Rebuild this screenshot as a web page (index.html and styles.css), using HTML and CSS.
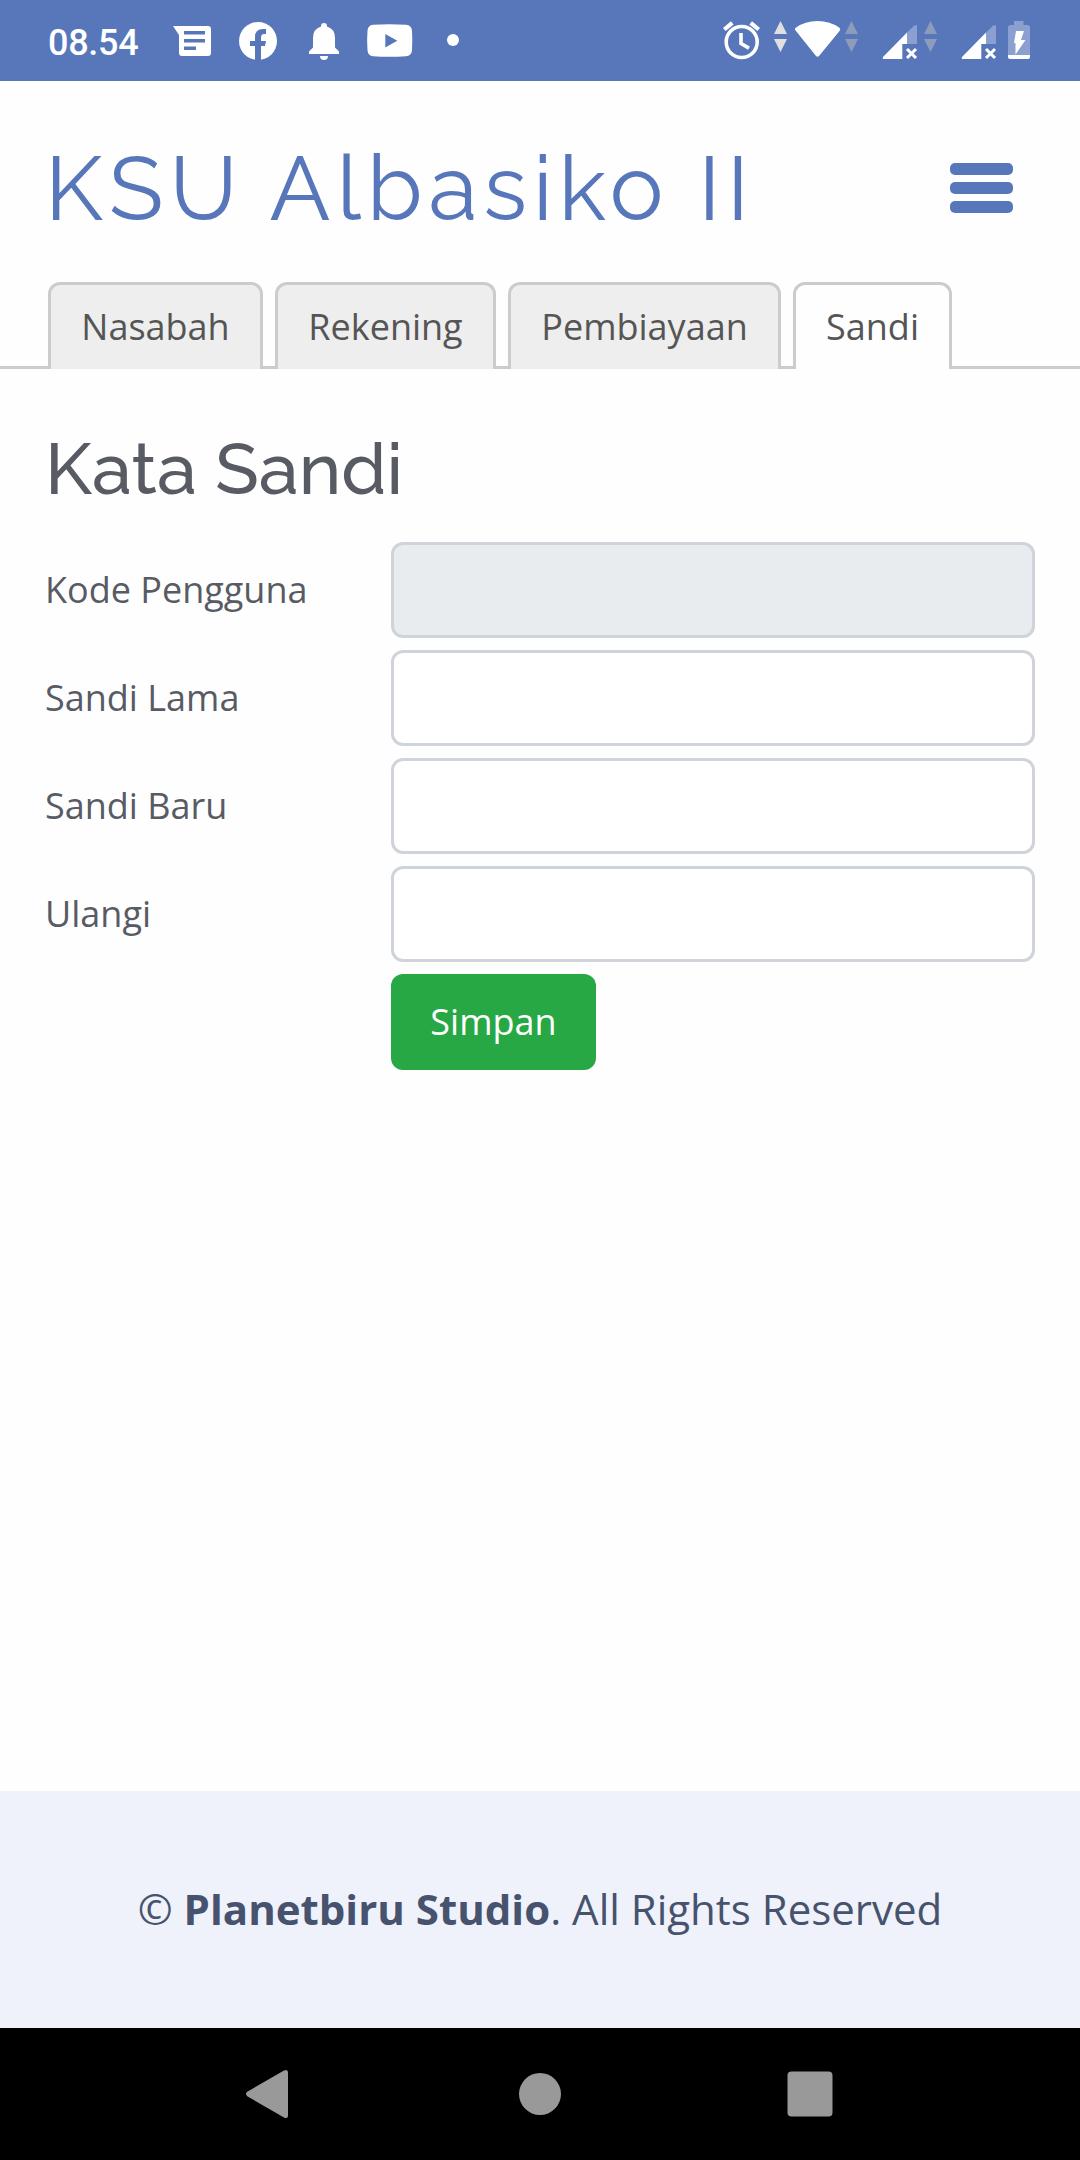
FILE: index.html
```html
<!DOCTYPE html>
<html lang="id">
<head>
<meta charset="utf-8">
<title>KSU Albasiko II</title>
<link rel="stylesheet" href="styles.css">
</head>
<body>
<div class="statusbar">
  <span class="clock">08.54</span>
  <svg class="notifications" width="300" height="81" viewBox="165 0 300 81" fill="#fff">
    <path d="M173 26h35q3 0 3 3v24q0 3-3 3h-26q-3 0-3-3V35z"/>
    <path d="M184 31h21v3.500h-21zM184 39h21v3.500h-21zM184 46.500h12v3.500h-12z" fill="#5777ba"/>
    <circle cx="258" cy="41" r="19"/>
    <path d="M255 60V46h-5v-5h5v-4q0-8 8-8h3v5h-2q-3 0-3 4v3h5l-1 5h-4v14z" fill="#5777ba"/>
    <path d="M309 54v-2.500l4-4V38q0-9 8-11.500V26a3 3 0 0 1 6 0v.5q8 2.500 8 11.500v9.500l4 4V54zM320 56h8a4 4 0 0 1-8 0z"/>
    <path d="M373 24.800q16.500-1 33 0 5.500.4 6 6 .6 9.700 0 19.400-.5 5.500-6 6-16.500 1-33 0-5-.5-5.500-6-.8-9.700 0-19.400.5-5.600 5.500-6z"/>
    <path d="M385.300 34v13.500l12-6.700z" fill="#5777ba"/>
    <circle cx="453" cy="40" r="6"/>
  </svg>
  <svg class="system" width="320" height="81" viewBox="715 0 320 81" fill="#fff">
    <g fill="none" stroke="#fff" stroke-width="3.600">
      <circle cx="741.700" cy="42" r="15.500"/>
      <path d="M741 33v10.500l8 4.600"/>
      <path d="M724.300 29.500l8-6.700M758.700 29.500l-8-6.700" stroke-width="4.200"/>
    </g>
    <path d="M780.500 21l6.500 13h-13zM774 39h13l-6.500 13z" fill="#e0e0e0"/>
    <path d="M796 31q-2-1.800-.3-3.300Q805 21 817.500 21t22 6.700q1.500 1.300 0 3.300L819 56q-1.500 1.500-3 0z"/>
    <g fill="#8c9cba"><path d="M851.500 21l6.500 13h-13zM845 39h13l-6.500 13z"/><path d="M930.500 21l6.500 13h-13zM924 39h13l-6.500 13z"/></g>
    <g id="signal">
      <path d="M883 59q-.5-1 0-2l24-24.500V44h-4.700v15z"/>
      <path d="M907 32.500l7-6.700q3-2 3 .7V44h-10z" fill="#8ba0d0"/>
      <path d="M907 49l9 9M916 49l-9 9" fill="none" stroke="#fff" stroke-width="3"/>
    </g>
    <use href="#signal" x="79"/>
    <path d="M1014 21h9.500v4h4q2.500 0 2.500 2.500V55h-22V27.500q0-2.500 2.500-2.500h3.500z" fill="#8ba0d0"/>
    <path d="M1008 55h22v2q0 2-2 2h-18q-2 0-2-2z"/>
    <path d="M1016 31h8l-3 9h4.500L1015.500 54.500V43h-1.500z"/>
  </svg>
</div>

<header class="header">
  <h1 class="brand">KSU Albasiko II</h1>
  <button class="menu" aria-label="Menu"><span class="bar"></span><span class="bar"></span><span class="bar"></span></button>
</header>

<nav class="tabs">
  <a class="tab tab-nasabah">Nasabah</a>
  <a class="tab tab-rekening">Rekening</a>
  <a class="tab tab-pembiayaan">Pembiayaan</a>
  <a class="tab tab-sandi active">Sandi</a>
</nav>

<main class="content">
  <h2 class="title">Kata Sandi</h2>
  <form class="form">
    <label class="label" for="user">Kode Pengguna</label><input class="field" id="user" disabled>
    <label class="label" for="old">Sandi Lama</label><input class="field" id="old" type="password">
    <label class="label" for="new">Sandi Baru</label><input class="field" id="new" type="password">
    <label class="label" for="repeat">Ulangi</label><input class="field" id="repeat" type="password">
    <button class="save" type="button">Simpan</button>
  </form>
</main>

<footer class="footer"><p class="copyright">© <strong>Planetbiru Studio</strong>. All Rights Reserved</p></footer>

<div class="navbar">
  <svg width="48" height="52" viewBox="0 0 48 52"><path d="M1.200 23.800L38 2.500q4-1.800 4 2v43q0 3.800-4 2L1.200 28.200q-2.400-2.200 0-4.400z"/></svg>
  <svg width="48" height="52" viewBox="0 0 48 52"><circle cx="24" cy="26" r="21"/></svg>
  <svg width="48" height="52" viewBox="0 0 48 52"><rect x="1.500" y="3.500" width="45" height="45" rx="4"/></svg>
</div>
</body>
</html>
```

FILE: styles.css
```css
* { box-sizing: border-box; }
body {
  margin: 0;
  width: 1080px;
  height: 2160px;
  display: flex;
  flex-direction: column;
  background: #fefefe;
  color: #585b63;
  font-family: "Open Sans", sans-serif;
  font-size: 36px;
}
svg { display: block; }
.statusbar {
  height: 81px;
  display: flex;
  align-items: center;
  background: #5777ba;
  color: #fff;
}
.clock {
  width: 117px;
  margin-left: 48px;
  font: 500 36px/44px Roboto, sans-serif;
  letter-spacing: -0.3px;
  padding-top: 4px;
}
.system { margin-left: auto; margin-right: 45px; }
.header {
  height: 201px;
  display: flex;
  justify-content: space-between;
  padding: 0 67px 0 45px;
}
.brand {
  margin: 53px 0 0;
  font: 400 90px/108px Raleway, Lato, sans-serif;
  letter-spacing: 6px;
  color: #5777ba;
  white-space: nowrap;
}
.menu {
  width: 63px;
  margin: 82px 0 0;
  padding: 0;
  border: 0;
  background: none;
  display: flex;
  flex-direction: column;
  gap: 7px;
}
.bar { width: 63px; height: 12px; border-radius: 5px; background: #5777ba; }
.tabs {
  height: 87px;
  display: flex;
  gap: 12px;
  padding-left: 48px;
  background: linear-gradient(#ccc, #ccc) left bottom / 100% 3px no-repeat;
}
.tab {
  height: 87px;
  border: 3px solid #ccc;
  border-bottom: 0;
  border-radius: 12px 12px 0 0;
  background: #eee;
  color: #555;
  text-align: center;
  line-height: 84px;
}
.tab-nasabah { width: 215px; }
.tab-rekening { width: 221px; }
.tab-pembiayaan { width: 273px; }
.tab-sandi { width: 159px; }
.active { background: #fefefe; }
.content { flex: 1; padding: 57px 45px 0; }
.title {
  margin: 0;
  height: 116px;
  font: 500 72px/86px Raleway, Lato, sans-serif;
}
.form {
  display: grid;
  grid-template-columns: 346px 644px;
  grid-auto-rows: 96px;
  row-gap: 12px;
}
.label { line-height: 96px; }
.field {
  width: 100%;
  padding: 0 30px;
  border: 3px solid #ced4da;
  border-radius: 12px;
  background: #fff;
  font: inherit;
}
.field:disabled { background: #e8ecef; }
.save {
  grid-column: 2;
  width: 205px;
  padding: 0 0 2px;
  border: 0;
  border-radius: 12px;
  background: #28a745;
  color: #fff;
  font: inherit;
}
.footer {
  height: 237px;
  background: #eff2fa;
  color: #47536e;
  text-align: center;
}
.copyright { margin: 0; padding-top: 88px; font-size: 42px; line-height: 60px; }
.navbar {
  height: 132px;
  display: flex;
  justify-content: center;
  align-items: center;
  gap: 222px;
  background: #000;
  fill: #999;
}
```
